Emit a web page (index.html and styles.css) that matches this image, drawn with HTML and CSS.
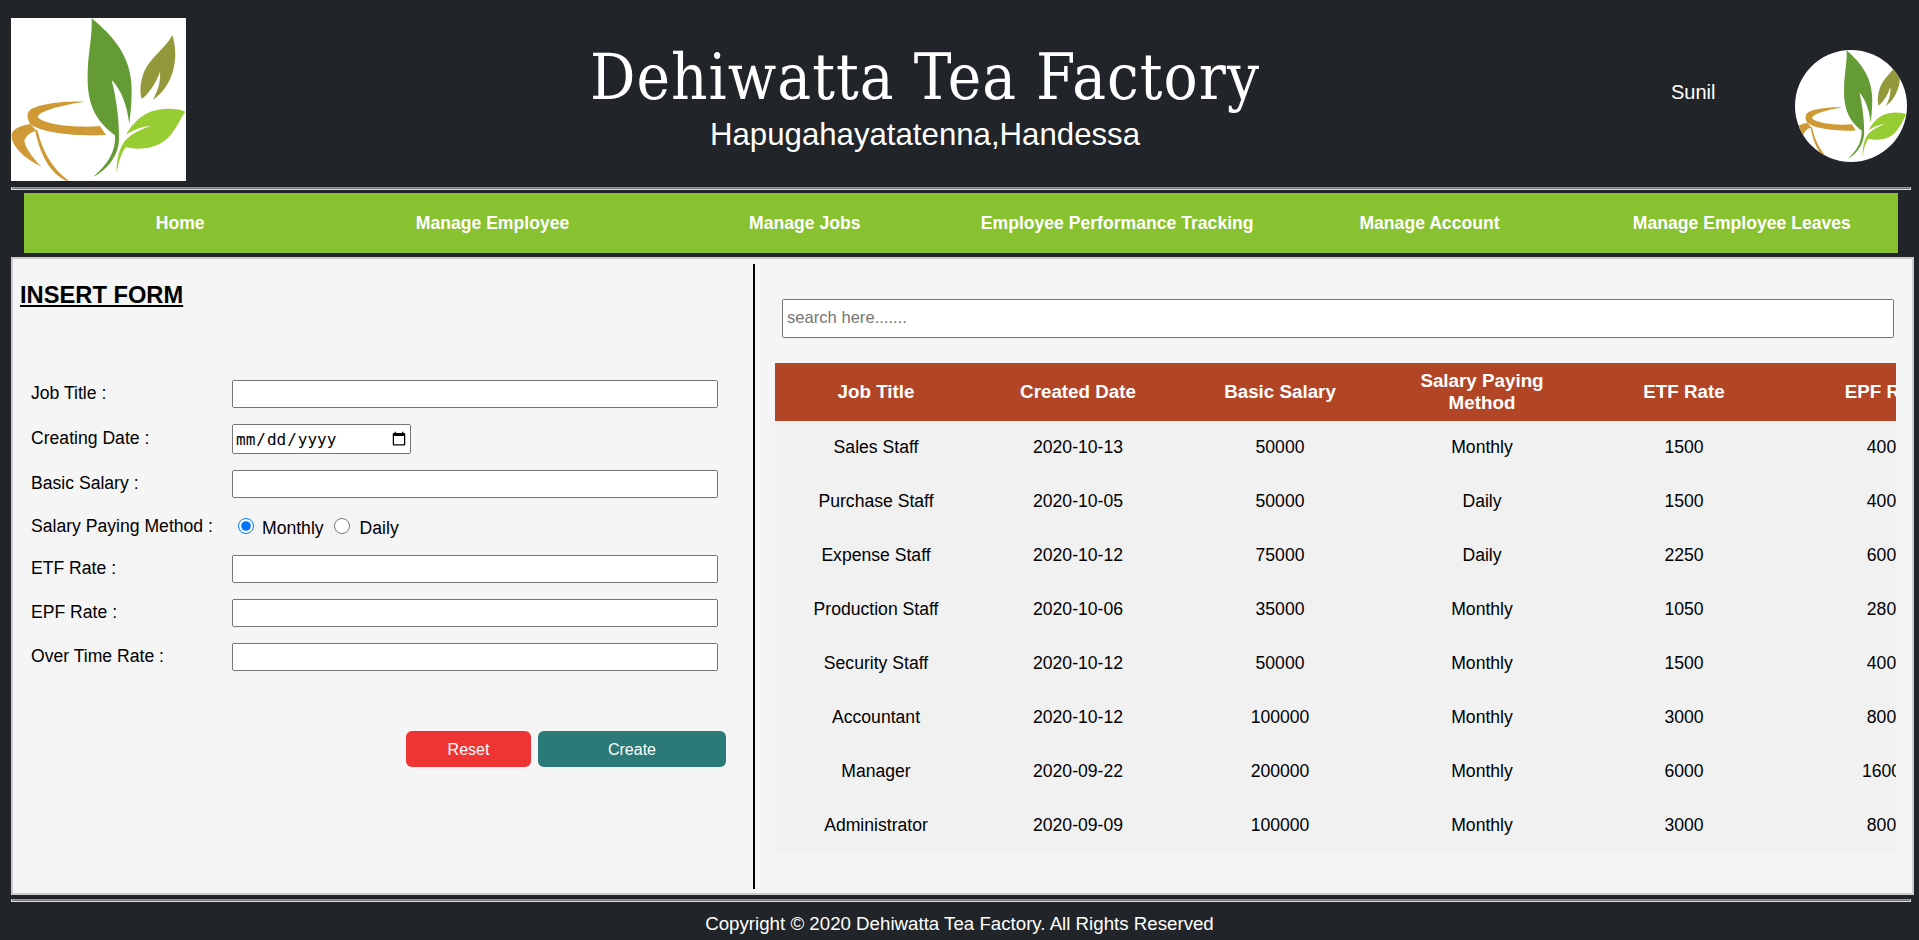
FILE: index.html
```html
<!DOCTYPE html>
<html lang="en">
<head>
  <meta charset="UTF-8" />
  <title>Dehiwatta Tea Factory</title>
  <link rel="stylesheet" href="styles.css">
</head>
<body>
  <!-- logo artwork, used twice -->
  <svg class="defs" width="0" height="0">
    <symbol id="teaLogo" viewBox="0 0 525 489" preserveAspectRatio="none">
      <rect width="525" height="489" fill="#fff"/>
      <path fill="#659b35" d="M242 1C300 50 362 110 362 215C362 260 358 290 355 318C348 260 330 215 302 186C315 240 325 300 324 365C322 420 280 460 247 476C290 440 315 400 312 352C270 320 232 280 230 190C228 110 245 60 242 1Z"/>
      <path fill="#93983a" d="M484 51C495 90 495 120 488 150C478 195 455 225 425 246C440 220 450 190 447 161C435 195 415 225 392 243C385 220 388 190 400 160C420 115 465 90 484 51Z"/>
      <path fill="#98cc33" d="M523 281C500 270 447 268 410 285C385 297 362 320 345 350C375 332 400 324 420 324C395 332 365 345 345 365C325 385 315 430 317 466C322 435 330 405 345 388C375 395 420 395 455 372C490 350 505 305 523 281Z"/>
      <path fill="#cf9a35" d="M222 251C160 248 75 258 55 278C45 290 50 305 58 318C90 345 200 356 285 351C278 340 272 332 267 324C200 330 110 322 82 300C70 285 140 262 222 251Z"/>
      <path fill="#cf9a35" d="M58 318C35 322 10 330 3 345C-2 365 10 385 30 405C50 425 75 438 92 446C70 425 45 395 40 368C45 352 60 342 76 338Z"/>
      <path fill="#cf9a35" d="M72 334L80 338C92 395 125 455 174 488L165 488C115 465 85 405 72 334Z"/>
    </symbol>
  </svg>

  <header class="top">
    <svg class="logo"><use href="#teaLogo"/></svg>
    <div class="brand">
      <h1>Dehiwatta Tea Factory</h1>
      <p>Hapugahayatatenna,Handessa</p>
    </div>
    <div class="user">Sunil</div>
    <svg class="avatar"><use href="#teaLogo"/></svg>
  </header>

  <hr class="rule top-rule">

  <nav class="menu">
    <a href="#">Home</a>
    <a href="#">Manage Employee</a>
    <a href="#">Manage Jobs</a>
    <a href="#">Employee Performance Tracking</a>
    <a href="#">Manage Account</a>
    <a href="#">Manage Employee Leaves</a>
  </nav>

  <main class="panel">
    <section class="form-side">
      <h2>INSERT FORM</h2>
      <form>
        <div class="row"><label>Job Title :</label><input type="text"></div>
        <div class="row"><label>Creating Date :</label><input type="date" class="date"></div>
        <div class="row"><label>Basic Salary :</label><input type="text"></div>
        <div class="row radios">
          <label>Salary Paying Method :</label>
          <span class="choices">
            <input type="radio" name="method" checked><span>Monthly</span>
            <input type="radio" name="method"><span>Daily</span>
          </span>
        </div>
        <div class="row"><label>ETF Rate :</label><input type="text"></div>
        <div class="row"><label>EPF Rate :</label><input type="text"></div>
        <div class="row"><label>Over Time Rate :</label><input type="text"></div>
        <div class="actions">
          <button type="reset" class="btn-reset">Reset</button>
          <button type="button" class="btn-create">Create</button>
        </div>
      </form>
    </section>

    <section class="list-side">
      <input type="text" class="search" placeholder="search here.......">
      <div class="table-wrap">
        <table>
          <thead>
            <tr><th>Job Title</th><th>Created Date</th><th>Basic Salary</th><th>Salary Paying Method</th><th>ETF Rate</th><th>EPF Rate</th></tr>
          </thead>
          <tbody>
            <tr><td>Sales Staff</td><td>2020-10-13</td><td>50000</td><td>Monthly</td><td>1500</td><td>400</td></tr>
            <tr><td>Purchase Staff</td><td>2020-10-05</td><td>50000</td><td>Daily</td><td>1500</td><td>400</td></tr>
            <tr><td>Expense Staff</td><td>2020-10-12</td><td>75000</td><td>Daily</td><td>2250</td><td>600</td></tr>
            <tr><td>Production Staff</td><td>2020-10-06</td><td>35000</td><td>Monthly</td><td>1050</td><td>280</td></tr>
            <tr><td>Security Staff</td><td>2020-10-12</td><td>50000</td><td>Monthly</td><td>1500</td><td>400</td></tr>
            <tr><td>Accountant</td><td>2020-10-12</td><td>100000</td><td>Monthly</td><td>3000</td><td>800</td></tr>
            <tr><td>Manager</td><td>2020-09-22</td><td>200000</td><td>Monthly</td><td>6000</td><td>1600</td></tr>
            <tr><td>Administrator</td><td>2020-09-09</td><td>100000</td><td>Monthly</td><td>3000</td><td>800</td></tr>
          </tbody>
        </table>
      </div>
    </section>
  </main>

  <hr class="rule bottom-rule">

  <footer class="copy">Copyright © 2020 Dehiwatta Tea Factory. All Rights Reserved</footer>
</body>
</html>
```

FILE: styles.css
```css
body {
  margin: 0;
  height: 940px;
  overflow: hidden;
  background-color: #212529;
  font-family: "Liberation Sans", Arial, sans-serif;
  font-size: 17.6px;
  color: #000;
}
.defs {
  display: block;
  height: 0;
}
.top {
  display: flex;
  height: 163px;
  padding: 18px 0 0 11px;
}
.logo {
  width: 175px;
  height: 163px;
  flex: none;
}
.brand {
  width: 1478px;
  flex: none;
  text-align: center;
  color: #fff;
}
.brand h1 {
  margin: 22px 0 0 0;
  font-family: "DejaVu Serif Condensed", "DejaVu Serif", serif;
  font-stretch: condensed;
  font-size: 63px;
  font-weight: normal;
  line-height: 76px;
  letter-spacing: 1.05px;
}
.brand p {
  margin: -2px 0 0 0;
  font-size: 31.2px;
  line-height: 41px;
}
.user {
  margin: 63px 0 0 7px;
  width: 124px;
  font-size: 20px;
  line-height: 22px;
  color: #fff;
}
.avatar {
  width: 112px;
  height: 112px;
  margin-top: 32px;
  border-radius: 50%;
  flex: none;
}
.rule {
  height: 1px;
  margin: 0 8px 0 11px;
  border: 1px solid #ddd;
  border-top-color: #999;
  background-color: #777;
}
.top-rule {
  margin-top: 6px;
}
.menu {
  display: grid;
  grid-template-columns: repeat(6, 1fr);
  width: 1874px;
  height: 60px;
  margin: 3px 0 4px 24px;
  background-color: #88c230;
}
.menu a {
  display: flex;
  align-items: center;
  justify-content: center;
  color: #fff;
  font-weight: bold;
  font-size: 17.6px;
  text-decoration: none;
}
.panel {
  display: flex;
  box-sizing: border-box;
  width: 1903px;
  height: 638px;
  margin-left: 11px;
  padding: 5px 0 4px 0;
  background-color: #f5f5f5;
  border: 2px solid #ccc;
}
.form-side {
  box-sizing: border-box;
  width: 742px;
  padding: 0 0 0 7px;
  border-right: 2px solid #000;
}
.form-side h2 {
  margin: 18px 0 72px 0;
  font-size: 23.7px;
  line-height: 26px;
  text-decoration: underline;
}
.row {
  display: flex;
  align-items: center;
  margin: 0 0 16px 11px;
}
.row label {
  width: 201px;
  flex: none;
  margin-bottom: 2px;
}
.row input[type="text"] {
  box-sizing: border-box;
  width: 486px;
  height: 28px;
}
.row .date {
  box-sizing: border-box;
  width: 179px;
  height: 30px;
  font-size: 16px;
  font-family: "DejaVu Sans Mono", monospace;
}
.radios {
  height: 25px;
}
.radios label {
  margin-bottom: 0;
}
.choices {
  display: flex;
  align-items: center;
  padding-left: 6px;
}
.choices input {
  width: 16px;
  height: 16px;
  margin: 0 8px 2px 0;
}
.choices span {
  margin: 3px 10px 0 0;
}
.choices span + input {
  margin-right: 10px;
}
.actions {
  display: flex;
  justify-content: flex-end;
  gap: 7px;
  width: 706px;
  margin-top: 60px;
}
.actions button {
  height: 36px;
  padding: 2px 0 0;
  border: none;
  border-radius: 6px;
  color: #fff;
  font-family: inherit;
  font-size: 16px;
  cursor: pointer;
}
.btn-reset {
  width: 125px;
  background-color: #ef3434;
}
.btn-create {
  width: 188px;
  background-color: #2b7a78;
}
.list-side {
  flex: 1;
  min-width: 0;
  padding: 35px 0 0 20px;
}
.search {
  display: block;
  box-sizing: border-box;
  width: 1112px;
  height: 39px;
  margin-left: 7px;
  padding: 0 3px 2px;
  font-family: inherit;
  font-size: 16.6px;
}
.table-wrap {
  width: 1121px;
  margin-top: 25px;
  overflow: hidden;
}
table {
  width: 1212px;
  table-layout: fixed;
  border-collapse: collapse;
  background-color: #f1f1f1;
  text-align: center;
}
th {
  height: 58px;
  padding: 0 30px;
  background-color: #b24525;
  color: #fff;
  font-size: 18.8px;
  line-height: 22px;
}
td {
  box-sizing: border-box;
  height: 54px;
  padding: 0 0 2px;
}
td:last-child {
  padding-right: 9px;
}
.bottom-rule {
  margin-top: 4px;
}
.copy {
  padding-top: 11px;
  color: #fff;
  font-size: 18.7px;
  line-height: 21px;
  text-align: center;
}
```
